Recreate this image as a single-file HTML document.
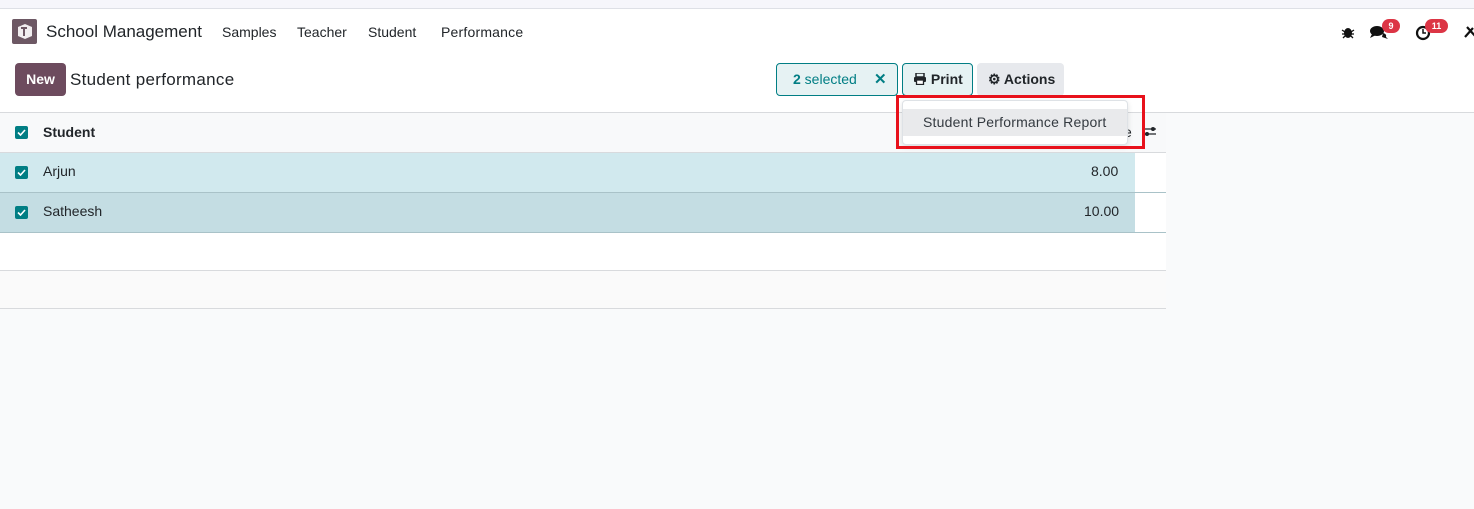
<!DOCTYPE html>
<html><head><meta charset="utf-8"><style>
*{box-sizing:border-box;margin:0;padding:0}
body{width:1474px;height:509px;background:#f9fafb;font-family:"Liberation Sans",sans-serif;color:#212529;position:relative;overflow:hidden;font-size:14px}
.abs{position:absolute}
.top{left:0;top:0;width:1474px;height:9px;background:#f6f6fb;border-bottom:1px solid #dee0e6}
.nav{left:0;top:9px;width:1474px;height:46px;background:#fff}
.cp{left:0;top:55px;width:1474px;height:58px;background:#fff;border-bottom:1px solid #d8dadd}
.chk{width:13px;height:13px;background:#017e84;border-radius:2px;display:flex;align-items:center;justify-content:center}
.row{left:0;width:1166px;border-bottom:1px solid #d8dadd}
</style></head><body>
<div class="abs top"></div>
<div class="abs nav">
  <div class="abs" style="left:12px;top:10px;width:25px;height:25px;background:#6d5864;border-radius:2px">
    <svg width="25" height="25" viewBox="0 0 25 25"><path d="M6 8 L13 5 L20 8 L20 17 L13 20 L6 17Z" fill="#fff" opacity=".9"/><path d="M9 9 H15 M12 9 V17" stroke="#6d5864" stroke-width="2"/></svg>
  </div>
  <div class="abs" style="left:46px;top:13px;font-size:17px;color:#212529">School Management</div>
  <div class="abs" style="left:222px;top:15px;font-size:14px">Samples</div>
  <div class="abs" style="left:297px;top:15px;font-size:14px">Teacher</div>
  <div class="abs" style="left:368px;top:15px;font-size:14px">Student</div>
  <div class="abs" style="left:441px;top:15px;font-size:14px;letter-spacing:.2px">Performance</div>
  <svg class="abs" style="left:1341px;top:16px" width="14" height="14" viewBox="0 0 14 14"><ellipse cx="7" cy="8" rx="4" ry="5" fill="#111"/><path d="M1 5l3 2M13 5l-3 2M1 9h3M13 9h-3M2 13l2-2M12 13l-2-2" stroke="#111" stroke-width="1.3"/></svg>
  <svg class="abs" style="left:1369px;top:15px" width="22" height="16" viewBox="0 0 22 16"><ellipse cx="8" cy="7" rx="7" ry="5" fill="#111"/><path d="M3 10 L1 14 L7 11Z" fill="#111"/><path d="M14 9 Q18 10 17 13 L19 15 L13 13" fill="#111"/></svg>
  <div class="abs" style="left:1382px;top:10px;width:18px;height:14px;background:#dc3545;border-radius:7px;color:#fff;font-size:9px;font-weight:bold;text-align:center;line-height:14px">9</div>
  <svg class="abs" style="left:1415px;top:15px" width="17" height="17" viewBox="0 0 17 17"><circle cx="8" cy="9" r="6" fill="none" stroke="#111" stroke-width="2.2"/><path d="M8 5v4h3" stroke="#111" stroke-width="1.5" fill="none"/></svg>
  <div class="abs" style="left:1425px;top:10px;width:23px;height:14px;background:#dc3545;border-radius:7px;color:#fff;font-size:9px;font-weight:bold;text-align:center;line-height:14px">11</div>
  <svg class="abs" style="left:1463px;top:15px" width="14" height="15" viewBox="0 0 14 15"><path d="M2 13 L10 4 M4 3 L13 13" stroke="#111" stroke-width="2.2"/></svg>
</div>
<div class="abs cp">
  <div class="abs" style="left:15px;top:8px;width:51px;height:33px;background:#6d4b5e;border-radius:4px;color:#fff;font-weight:bold;font-size:14px;text-align:center;line-height:32px">New</div>
  <div class="abs" style="left:70px;top:15px;font-size:17px;letter-spacing:.3px">Student performance</div>
  <div class="abs" style="left:776px;top:8px;width:122px;height:33px;background:#e6f2f3;border:1px solid #017e84;border-radius:4px;color:#017e84;font-size:14px;line-height:31px;padding-left:16px"><b>2</b> selected<span style="position:absolute;left:97px;font-weight:bold;font-size:15px">✕</span></div>
  <div class="abs" style="left:902px;top:8px;width:71px;height:33px;background:#e6f2f3;border:1px solid #017e84;border-radius:4px;font-weight:bold;font-size:14px;line-height:31px;padding-left:10px">
    <svg width="14" height="12" viewBox="0 0 14 12" style="vertical-align:-1px"><rect x="3" y="0" width="8" height="4" fill="none" stroke="#212529" stroke-width="1.5"/><rect x="1" y="4" width="12" height="5" rx="1" fill="#212529"/><rect x="3.5" y="7" width="7" height="4.5" fill="#fff" stroke="#212529" stroke-width="1.3"/></svg> Print</div>
  <div class="abs" style="left:977px;top:8px;width:87px;height:33px;background:#e7e9ed;border-radius:4px;font-weight:bold;font-size:14px;line-height:32px;padding-left:11px">⚙ Actions</div>
</div>
<div class="abs row" style="top:113px;height:40px;background:#f8f9fa">
  <div class="abs chk" style="left:15px;top:13px"><svg width="9" height="7"><path d="M1 3.5l2.5 2.5 4.5-5" stroke="#fff" stroke-width="1.6" fill="none"/></svg></div>
  <div class="abs" style="left:43px;top:11px;font-weight:bold">Student</div>
  <div class="abs" style="left:1124px;top:11px">e</div>
  <svg class="abs" style="left:1143px;top:12px" width="14" height="14"><path d="M1 4h12M1 9h12" stroke="#212529" stroke-width="1.3"/><circle cx="10" cy="4" r="2" fill="#212529"/><circle cx="4" cy="9" r="2" fill="#212529"/></svg>
</div>
<div class="abs row" style="top:153px;height:40px;background:#fff;border-bottom-color:#a9c2c8">
  <div class="abs" style="left:0;top:0;width:1135px;height:39px;background:#d1e9ee"></div>
  <div class="abs chk" style="left:15px;top:13px"><svg width="9" height="7"><path d="M1 3.5l2.5 2.5 4.5-5" stroke="#fff" stroke-width="1.6" fill="none"/></svg></div>
  <div class="abs" style="left:43px;top:10px">Arjun</div>
  <div class="abs" style="left:1091px;top:10px">8.00</div>
</div>
<div class="abs row" style="top:193px;height:40px;background:#fff;border-bottom-color:#a9c2c8">
  <div class="abs" style="left:0;top:0;width:1135px;height:39px;background:#c4dde3"></div>
  <div class="abs chk" style="left:15px;top:13px"><svg width="9" height="7"><path d="M1 3.5l2.5 2.5 4.5-5" stroke="#fff" stroke-width="1.6" fill="none"/></svg></div>
  <div class="abs" style="left:43px;top:10px">Satheesh</div>
  <div class="abs" style="left:1084px;top:10px">10.00</div>
</div>
<div class="abs row" style="top:233px;height:38px;background:#fff"></div>
<div class="abs row" style="top:271px;height:38px;background:#fafafa"></div>
<div class="abs" style="left:902px;top:100px;width:226px;height:45px;background:#fff;border:1px solid #dee2e6;border-radius:4px;box-shadow:0 2px 6px rgba(0,0,0,.12)">
  <div class="abs" style="left:0;top:8px;width:224px;height:27px;background:#e9eaec;padding-left:20px;line-height:27px;font-size:14px;color:#343a40;letter-spacing:.2px">Student Performance Report</div>
</div>
<div class="abs" style="left:896px;top:95px;width:249px;height:54px;border:3px solid #e8111b"></div>
</body></html>
